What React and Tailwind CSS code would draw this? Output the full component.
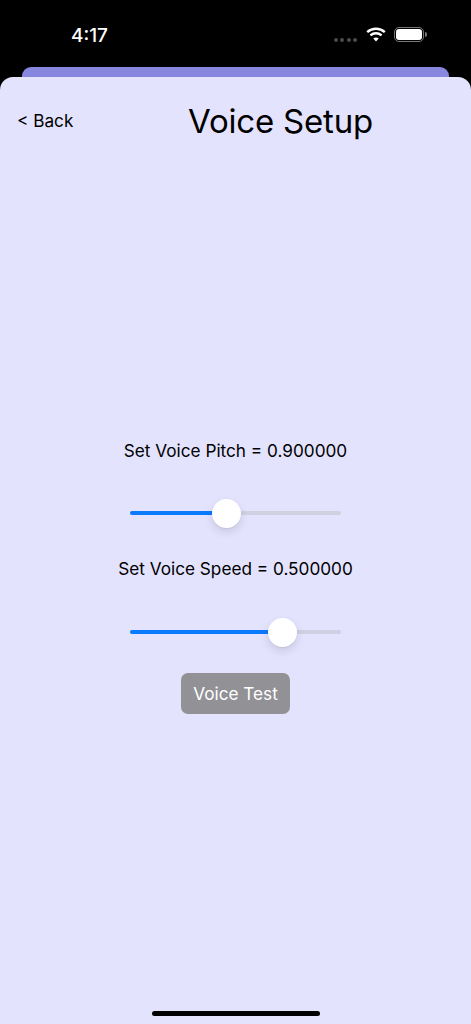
const font = { fontFamily: 'Inter, "Liberation Sans", sans-serif' };

function Slider({ percent }) {
  return (
    <div className="relative h-7 w-[211px] flex items-center">
      <div className="h-1 w-full rounded-full bg-[#d0d0e2]" />
      <div className="absolute left-0 h-1 rounded-full bg-[#0a7aff]" style={{ width: `${percent}%` }} />
      <div
        className="absolute h-[29px] w-[29px] -ml-[14px] rounded-full bg-white shadow-[0_4px_10px_rgba(0,0,0,0.12),0_1px_1px_rgba(0,0,0,0.06)]"
        style={{ left: `${percent}%` }}
      />
    </div>
  );
}

export default function App() {
  return (
    <div className="h-[1024px] w-[471px] overflow-hidden bg-black flex flex-col" style={font}>
      {/* Status bar */}
      <div className="h-[67px] shrink-0 flex items-start justify-between pl-[71px] pr-[44px] pt-[25px]">
        <span className="mt-px text-[19px] leading-[20px] font-medium text-white">4:17</span>
        <div className="flex items-center gap-2 mt-[2px]">
          <div className="flex gap-[2.5px] mr-px mt-[10px]">
            <span className="h-1 w-1 rounded-full bg-[#4a4a4a]" />
            <span className="h-1 w-1 rounded-full bg-[#4a4a4a]" />
            <span className="h-1 w-1 rounded-full bg-[#4a4a4a]" />
            <span className="h-1 w-1 rounded-full bg-[#4a4a4a]" />
          </div>
          <svg width="20" height="15" viewBox="0 0 20 15" fill="none" stroke="white" strokeWidth="2.4">
            <path d="M1.2 5.2C6.2 0.6 13.8 0.6 18.8 5.2" />
            <path d="M4.4 8.4C7.6 5.6 12.4 5.6 15.6 8.4" />
            <path d="M10 14.4L7.3 11.4C8.9 10.2 11.1 10.2 12.7 11.4Z" fill="white" stroke="none" />
          </svg>
          <div className="flex items-center gap-px">
            <div className="h-[15px] w-[30px] rounded-[5px] border border-[#777] p-px">
              <div className="h-full w-full rounded-[3px] bg-white" />
            </div>
            <div className="h-[5px] w-[2px] rounded-r-sm bg-[#777]" />
          </div>
        </div>
      </div>

      {/* Sheet behind */}
      <div className="h-[10px] shrink-0 mx-[22px] rounded-t-[9px] bg-[#8787df]" />

      {/* Main sheet */}
      <div className="flex-1 rounded-t-[13px] bg-[#e4e3fe] flex flex-col">
        <div className="flex items-center pl-[17px] pt-[23px]">
          <span className="w-[171px] text-[17.2px] leading-[42px] text-black">&lt; Back</span>
          <h1 className="text-[33px] leading-[42px] font-normal tracking-[-0.2px] text-black">Voice Setup</h1>
        </div>

        <div className="mt-[298px] flex flex-col items-center">
          <p className="text-[17.2px] leading-[22px] text-black">Set Voice Pitch = 0.900000</p>
          <div className="mt-[37px]">
            <Slider percent={45.5} />
          </div>
          <p className="mt-[31px] text-[17.2px] leading-[22px] text-black">Set Voice Speed = 0.500000</p>
          <div className="mt-[38px]">
            <Slider percent={72} />
          </div>
          <button className="mt-[27px] h-[41px] w-[109px] rounded-[7px] bg-[#919196] text-[17.2px] text-white">
            Voice Test
          </button>
        </div>

        <div className="mt-auto mb-[8px] h-[5px] w-[168px] self-center rounded-full bg-black" />
      </div>
    </div>
  );
}
